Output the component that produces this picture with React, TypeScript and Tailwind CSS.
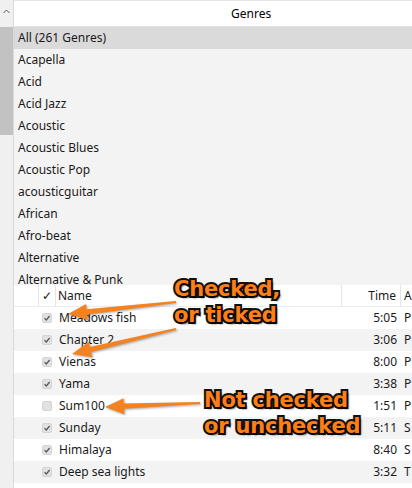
import React from "react";

const genres = [
  "All (261 Genres)",
  "Acapella",
  "Acid",
  "Acid Jazz",
  "Acoustic",
  "Acoustic Blues",
  "Acoustic Pop",
  "acousticguitar",
  "African",
  "Afro-beat",
  "Alternative",
  "Alternative & Punk",
];

const tracks = [
  { name: "Meadows fish", time: "5:05", a: "P", checked: true },
  { name: "Chapter 2", time: "3:06", a: "P", checked: true },
  { name: "Vienas", time: "8:00", a: "P", checked: true },
  { name: "Yama", time: "3:38", a: "P", checked: true },
  { name: "Sum100", time: "1:51", a: "P", checked: false },
  { name: "Sunday", time: "5:11", a: "S", checked: true },
  { name: "Himalaya", time: "8:40", a: "S", checked: true },
  { name: "Deep sea lights", time: "3:32", a: "T", checked: true },
];

// tapered arrow: thin tail, wider near head, triangle tip
function arrowPoints(x1: number, y1: number, x2: number, y2: number) {
  const dx = x2 - x1;
  const dy = y2 - y1;
  const len = Math.sqrt(dx * dx + dy * dy);
  const ux = dx / len;
  const uy = dy / len;
  const nx = -uy;
  const ny = ux;
  const headLen = 19;
  const headW = 8;
  const bx = x2 - ux * headLen;
  const by = y2 - uy * headLen;
  const p = (x: number, y: number) => `${x.toFixed(1)},${y.toFixed(1)}`;
  return [
    p(x1 + nx * 0.9, y1 + ny * 0.9),
    p(bx + nx * 2.6, by + ny * 2.6),
    p(bx + nx * headW, by + ny * headW),
    p(x2, y2),
    p(bx - nx * headW, by - ny * headW),
    p(bx - nx * 2.6, by - ny * 2.6),
    p(x1 - nx * 0.9, y1 - ny * 0.9),
  ].join(" ");
}

function Checkbox({ checked }: { checked: boolean }) {
  return (
    <div className="w-[10px] h-[10px] rounded-[2px] bg-[#e1e1e1] border border-[#d4d4d4] flex items-center justify-center">
      {checked && (
        <svg width="8" height="8" viewBox="0 0 8 8">
          <path d="M1.5 4.2 L3.3 6 L6.6 2" fill="none" stroke="#555" strokeWidth="1.2" />
        </svg>
      )}
    </div>
  );
}

const note =
  "absolute font-['DejaVu_Sans',sans-serif] font-bold text-[21px] leading-[26px] text-[#ff7f16] tracking-[-0.2px] [-webkit-text-stroke:4px_#111] [paint-order:stroke_fill] [text-shadow:2px_2px_2px_rgba(0,0,0,0.75)] whitespace-pre";

export default function App() {
  return (
    <div className="relative w-[412px] h-[488px] overflow-hidden bg-white text-[12px] text-[#1a1a1a] font-['Noto_Sans',sans-serif]">
      {/* Genres browser */}
      <div className="flex h-[285px]">
        <div className="w-[14px] shrink-0 bg-[#f0f0f0] border-r border-[#dadada] flex flex-col">
          <div className="h-[27px] flex justify-center pt-[9px]">
            <svg width="7" height="5" viewBox="0 0 7 5">
              <path d="M0.5 4 L3.5 1 L6.5 4" fill="none" stroke="#555" strokeWidth="1" />
            </svg>
          </div>
          <div className="h-[108px] bg-[#c2c2c2]" />
        </div>
        <div className="flex-1 flex flex-col min-w-0">
          <div className="h-[27px] shrink-0 bg-white border-t border-[#e6e6e6] border-b border-b-[#e3e3e3] flex items-center pl-[217px] text-black">
            Genres
          </div>
          <div className="flex-1 bg-[#f3f3f3] overflow-hidden">
            {genres.map((g, i) => (
              <div
                key={g}
                className={`h-[22px] flex items-center pl-[4px] ${i === 0 ? "bg-[#dadada]" : ""}`}
              >
                {g}
              </div>
            ))}
          </div>
        </div>
      </div>

      {/* Tracks table */}
      <div className="flex h-[203px]">
        <div className="w-[14px] shrink-0 bg-[#f0f0f0] border-r border-[#dadada]" />
        <div className="flex-1 flex flex-col min-w-0 bg-white">
          <div className="h-[22px] shrink-0 flex items-center border-b border-[#ececec]">
            <div className="w-[25px] h-full border-r border-[#e4e4e4]" />
            <div className="w-[17px] h-full flex items-center justify-center border-r border-[#e4e4e4] text-[12px]">
              ✓
            </div>
            <div className="w-[286px] h-full flex items-center pl-[2px] border-r border-[#e4e4e4]">Name</div>
            <div className="w-[59px] h-full flex items-center justify-end pr-[4px] border-r border-[#e4e4e4]">Time</div>
            <div className="pl-[3px]">A</div>
          </div>
          {tracks.map((t, i) => (
            <div
              key={t.name}
              className={`h-[22px] shrink-0 flex items-center ${i % 2 === 1 ? "bg-[#f3f3f3]" : "bg-white"}`}
            >
              <div className="w-[28px]" />
              <div className="w-[14px] flex items-center">
                <Checkbox checked={t.checked} />
              </div>
              <div className="w-[286px] pl-[3px] truncate">{t.name}</div>
              <div className="w-[59px] text-right pr-[4px]">{t.time}</div>
              <div className="pl-[3px]">{t.a}</div>
            </div>
          ))}
        </div>
      </div>

      {/* Annotations */}
      <svg className="absolute inset-0 pointer-events-none" width="412" height="488">
        <g fill="#f5821f" style={{ filter: "drop-shadow(1px 1px 1px rgba(0,0,0,0.35))" }}>
          <polygon points={arrowPoints(176, 302, 68, 314)} />
          <polygon points={arrowPoints(176, 329, 72, 354)} />
          <polygon points={arrowPoints(200, 403, 105, 407)} />
        </g>
      </svg>
      <div className={`${note} left-[174px] top-[276px]`}>{"Checked,\nor ticked"}</div>
      <div className={`${note} left-[204px] top-[387px]`}>{"Not checked\nor unchecked"}</div>
    </div>
  );
}
